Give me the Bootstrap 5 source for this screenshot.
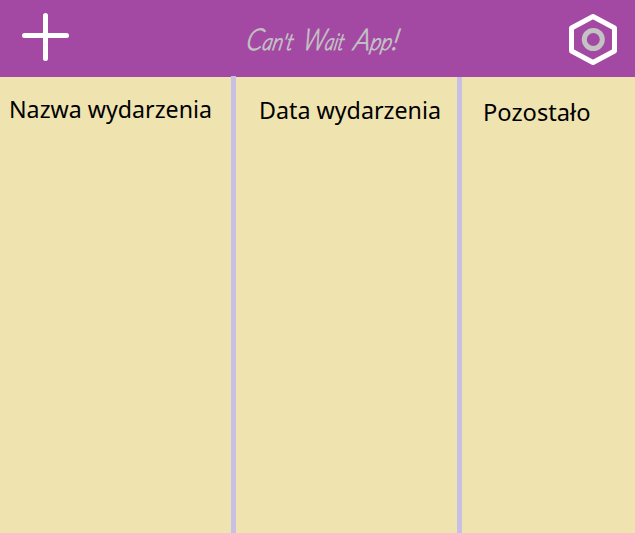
<!DOCTYPE html>
<html lang="pl">
<head>
<meta charset="utf-8">
<meta name="viewport" content="width=device-width, initial-scale=1">
<title>Can't Wait App!</title>
<link href="https://cdn.jsdelivr.net/npm/bootstrap@5.3.0/dist/css/bootstrap.min.css" rel="stylesheet">
<style>
body{background:#efe3af;color:#000}
.app-bar{height:77px;background:#a349a4;padding:0 17px 0 20px}
.icon-btn{line-height:0}
.event-cols{display:grid;grid-template-columns:236px 226px 1fr}
.event-col{border-right:5px solid #c8bfe7}
.event-col:last-child{border-right:0}
.event-col:first-child{margin-top:-1px;padding-top:1px}
.col-title{margin:0;font-weight:400}
.col-title text{font:23px "Noto Sans","Open Sans",sans-serif}
.brand-mark{line-height:1;overflow:visible}
.brand-text{font:italic 300 23px Lato,"Liberation Sans",sans-serif;fill:#c3c3c3;stroke:#c3c3c3;stroke-width:.8px}
.brand-cap{font-size:30px}
</style>
<script src="https://cdn.jsdelivr.net/npm/bootstrap@5.3.0/dist/js/bootstrap.bundle.min.js"></script>
</head>
<body>
<div class="vh-100 d-flex flex-column overflow-hidden">
  <header class="app-bar d-flex align-items-center justify-content-between">
    <button class="btn p-0 border-0 rounded-0 icon-btn" aria-label="Dodaj">
      <svg width="52" height="77" fill="none" stroke="#fff" stroke-width="5" stroke-linecap="round"><path d="M4.5 35.5H46.5M25.5 15.5V58.5"/></svg>
    </button>
    <h1 class="m-0 icon-btn">
      <svg class="brand-mark" width="190" height="77">
        <g class="brand-text" transform="translate(0 49.5) skewX(-12)">
          <text x="20" textLength="47" lengthAdjust="spacingAndGlyphs"><tspan class="brand-cap">C</tspan>an't</text>
          <text x="77" textLength="41" lengthAdjust="spacingAndGlyphs"><tspan class="brand-cap">W</tspan>ait</text>
          <text x="127.5" textLength="45" lengthAdjust="spacingAndGlyphs"><tspan class="brand-cap">A</tspan>pp<tspan class="brand-cap">!</tspan></text>
        </g>
      </svg>
    </h1>
    <button class="btn p-0 border-0 rounded-0 icon-btn" aria-label="Ustawienia">
      <svg width="50" height="77" fill="none"><path d="M25 16.5L46.5 28V51L25 62.5L3.5 51V28Z" stroke="#fff" stroke-width="5" stroke-linejoin="round"/><circle cx="25.3" cy="39.5" r="9" stroke="#c3c3c3" stroke-width="5"/></svg>
    </button>
  </header>
  <main class="event-cols flex-grow-1">
    <section class="event-col"><h2 class="col-title"><svg class="d-block" width="231" height="60"><text x="9" y="41" textLength="203" lengthAdjust="spacingAndGlyphs">Nazwa wydarzenia</text></svg></h2></section>
    <section class="event-col"><h2 class="col-title"><svg class="d-block" width="221" height="60"><text x="23" y="42" textLength="182" lengthAdjust="spacingAndGlyphs">Data wydarzenia</text></svg></h2></section>
    <section class="event-col"><h2 class="col-title"><svg class="d-block" width="173" height="60"><text x="21" y="44" textLength="107.5" lengthAdjust="spacingAndGlyphs">Pozostało</text></svg></h2></section>
  </main>
</div>
</body>
</html>
